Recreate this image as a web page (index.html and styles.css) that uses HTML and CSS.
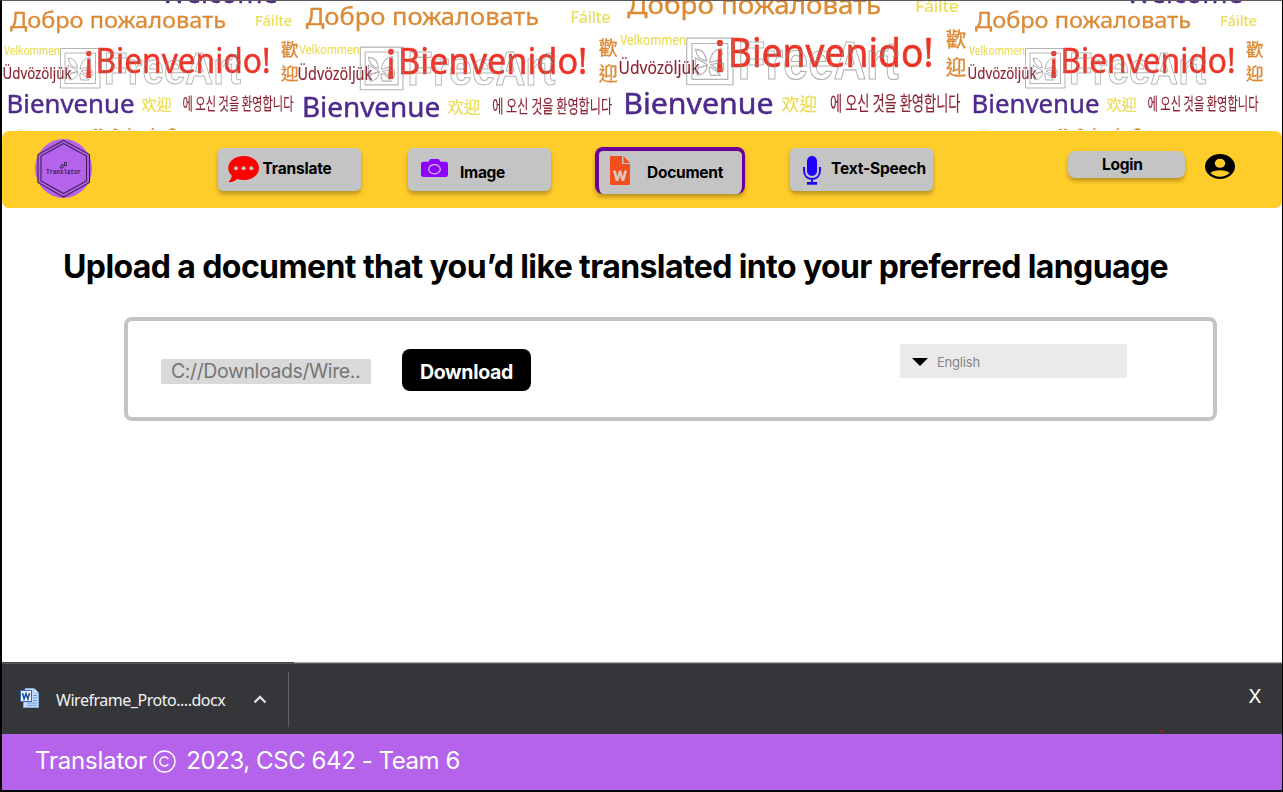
FILE: index.html
```html
<!DOCTYPE html>
<html lang="en">
<head>
<meta charset="utf-8">
<title>Translator</title>
<link rel="stylesheet" href="styles.css">
</head>
<body>
<div class="page">
  <header class="banner">
    <svg class="banner-art" viewBox="2 1 1280 129" width="1280" height="129">
      <defs>
        <g id="welcome-tile">
          <text class="violet" x="161" y="2.600" font-size="27" textLength="117" lengthAdjust="spacingAndGlyphs">Welcome</text>
          <text class="orange" x="10" y="28" font-size="22" textLength="216" lengthAdjust="spacingAndGlyphs">Добро пожаловать</text>
          <text class="yellow" x="255" y="26" font-size="14.5" textLength="37" lengthAdjust="spacingAndGlyphs">Fáilte</text>
          <text class="yellow" x="4" y="54.7" font-size="12.5" textLength="56" lengthAdjust="spacingAndGlyphs">Velkommen</text>
          <text class="maroon" x="2.5" y="78.7" font-size="16" textLength="69" lengthAdjust="spacingAndGlyphs">Üdvözöljük</text>
          <text class="red" x="83.500" y="70.500" font-size="37" textLength="10.500" lengthAdjust="spacingAndGlyphs">¡</text>
          <text class="red" x="95.500" y="73.3" font-size="34" textLength="175" lengthAdjust="spacingAndGlyphs">Bienvenido!</text>
          <text class="orange cjk" x="281" y="56" font-size="17.5">歡</text>
          <text class="orange cjk" x="281" y="80" font-size="17.5">迎</text>
          <text class="violet heavy" x="6.500" y="113" font-size="25" textLength="128" lengthAdjust="spacingAndGlyphs">Bienvenue</text>
          <text class="yellow cjk" x="141.500" y="110" font-size="15">欢迎</text>
          <text class="maroon kor" x="182.500" y="110" font-size="17" textLength="111" lengthAdjust="spacingAndGlyphs">에 오신 것을 환영합니다</text>
          <g class="mark">
            <path d="M60.500 48.500h39.500v39.500h-39.500z"/>
            <path d="M65 53h30.500v30.500h-30.500z"/>
            <path d="M68 58q8 0 9.500 10q-8-1-9.500-10zM68 65l10 6q-6 4-10 1zM90 57q-9 2-10 12q9-1 11-7zM81 71q6-2 11-1v6q-6-1-11-5zM68 77q4-6 10-5q-1 7-8 8zM80 73q6 2 9 7h-8q-2-4-1-7z"/>
            <text x="104" y="83.500" font-size="45" textLength="137" lengthAdjust="spacingAndGlyphs">FreeArt</text>
          </g>
          <path class="yellow" d="M17.500 129.500h3v1h-3z"/>
          <path class="orange" d="M94 129h3v1h-3zM99 129h3v1h-3zM113 130q2-3 5 0zM128 130l1-2h1.500l-1 2zM151.500 130l1-2h1.500l-1 2zM169 130q3-3.500 7 0z"/>
        </g>
      </defs>
      <use href="#welcome-tile"/>
      <use href="#welcome-tile" transform="translate(294.900 -5.200) scale(1.081 1.079)"/>
      <use href="#welcome-tile" transform="translate(615.600 -19) scale(1.175 1.179)"/>
      <use href="#welcome-tile" transform="translate(965 0)"/>
    </svg>
  </header>

  <nav class="nav">
    <svg class="logo" viewBox="0 0 57 59" width="57" height="59">
      <ellipse cx="28.500" cy="29.500" rx="28.500" ry="29.500" fill="#b463ea"/>
      <g fill="none" stroke="#42205f" stroke-width="1.150">
        <path d="M28.500 1.500L54.500 15.500V43.500L28.500 58L3 43.500V15.500Z"/>
        <path d="M28.500 4.500L51.500 17V42L28.500 54.500L6 42V17Z"/>
        <path d="M26 27q0-1.500 2-1.500v3.500h-3zM29.500 23.500h2v3l-2 .5z" stroke-width="1"/>
      </g>
      <text class="logo-text" x="11" y="35.200" textLength="35" lengthAdjust="spacingAndGlyphs">Translator</text>
    </svg>

    <a class="tab tab-translate">
      <svg width="32" height="28" viewBox="0 0 32 28">
        <path fill="#ff0000" d="M15.500 1C7 1 .300 6.200.300 13c0 3 1.200 5.500 3.500 7.600C3.600 23.500 1.800 25.600.300 27.300c3.600.2 6.800-1.200 9-3.200 2 .7 4.200 1 6.500 1 8.500 0 15.200-5.200 15.200-12S24.300 1 15.500 1z"/>
        <g fill="#c4c4c4"><circle cx="8" cy="13.300" r="2"/><circle cx="15.600" cy="13.300" r="2"/><circle cx="23.300" cy="13.300" r="2"/></g>
      </svg>
      <span>Translate</span>
    </a>
    <a class="tab tab-image">
      <svg width="27" height="19" viewBox="0 0 27 19">
        <path fill="#8f00ff" d="M2.500 2.700h5L8.600.8Q9 0 10 0h7q1 0 1.400.8l1.100 1.900h5q2.500 0 2.500 2.200v10.800q0 2.300-2.500 2.300h-22Q0 18 0 15.700V4.900q0-2.200 2.500-2.200z"/>
        <ellipse cx="13.500" cy="10.200" rx="5.800" ry="4.600" fill="none" stroke="#c4c4c4" stroke-width="1.300"/>
      </svg>
      <span>Image</span>
    </a>
    <a class="tab tab-document">
      <svg width="20" height="29" viewBox="0 0 20 29">
        <path fill="#f24e1e" d="M1 0h11v8h8v20q0 1-1 1H1q-1 0-1-1V1q0-1 1-1zM13.500 0L20 7h-6.500z"/>
        <path fill="#dcc8c0" d="M3 14.500h2.800l1.500 6 1.700-6h2.200l1.700 6 1.500-6h2.600l-2.800 10.500h-2.600L10 19.500 8.400 25H5.800z"/>
      </svg>
      <span>Document</span>
    </a>
    <a class="tab tab-speech">
      <svg width="18" height="29" viewBox="0 0 18 29">
        <rect x="4" y="0" width="10" height="20" rx="5" fill="#1d00ff"/>
        <path fill="none" stroke="#1d00ff" stroke-width="1.900" d="M1 11v3.500C1 20 4.500 23 9 23s8-3 8-8.500V11M9 23v4"/>
        <path fill="#1d00ff" d="M4 26h10v2.700H4z"/>
      </svg>
      <span>Text-Speech</span>
    </a>
    <a class="login">Login</a>
    <svg class="avatar" width="30" height="25" viewBox="0 0 30 25">
      <ellipse cx="15" cy="12.500" rx="15" ry="12.500"/>
      <ellipse cx="15" cy="9.300" rx="5.200" ry="4.500" fill="#ffcd29"/>
      <path fill="#ffcd29" d="M5.300 19Q9 16.300 15 16.300T24.700 19Q20.500 22.700 15 22.700T5.300 19z"/>
    </svg>
  </nav>

  <main class="content">
    <h1 class="title">Upload a document that you’d like translated into your preferred language</h1>
    <section class="panel">
      <div class="path">C://Downloads/Wire..</div>
      <button class="download">Download</button>
      <div class="select">
        <svg width="16" height="8" viewBox="0 0 16 8"><path d="M0 0h16L8 8z"/></svg>
        <span>English</span>
      </div>
    </section>
  </main>

  <section class="shelf">
    <div class="file">
      <svg class="word" width="19" height="20" viewBox="0 0 19 20">
        <path d="M5 .5h9l4.500 4.500v14.500h-15V14" fill="#c7dcf8" stroke="#86aeea" stroke-width=".8"/>
        <path d="M14 .5V5h4.500" fill="#fff" stroke="#7aa4e0" stroke-width=".8"/>
        <path d="M13 7.500h4M13 10h4M13 12.500h4M7 15h10M7 17.300h10" stroke="#6d98dc"/>
        <rect x=".5" y="2.500" width="11" height="11" fill="#edf4fd" stroke="#3568b5"/>
        <path d="M2.500 5l1.600 6L6 5.500 7.900 11l1.600-6" fill="none" stroke="#1c4f9f" stroke-width="1.500"/>
      </svg>
      <span class="file-name">Wireframe_Proto....docx</span>
      <svg class="chevron" width="14" height="9" viewBox="0 0 14 9"><path d="M1.500 7.500L7 2l5.500 5.500" fill="none" stroke="#dedede" stroke-width="2.300"/></svg>
    </div>
    <i class="dot"></i>
    <span class="close">X</span>
  </section>

  <footer class="footer">
    <span class="brand">Translator</span>
    <svg width="23" height="23" viewBox="0 0 23 23" fill="none" stroke="#fff" stroke-width="1.400"><circle cx="11.500" cy="11.500" r="10.500"/><path d="M15.300 9.200A4.500 4.500 0 1 0 15.300 13.800"/></svg>
    <span class="legal">2023, CSC 642 - Team 6</span>
  </footer>
</div>
</body>
</html>
```
FILE: styles.css
```css
* { box-sizing: border-box; }
body { margin: 0; background: #fff; font-family: Inter, "Liberation Sans", sans-serif; color: #000; }
svg { display: block; flex: none; }
.page {
  width: 1283px; height: 792px; overflow: hidden;
  display: flex; flex-direction: column;
  border: solid #000; border-width: 1px 1px 2px 2px; border-top-color: #5d5960;
}
.page span, .page a, .title, .path, .download { white-space: nowrap; }

.banner { height: 130px; flex: none; overflow: hidden; }
.banner-art { font-family: "Noto Sans", "Noto Sans CJK SC", sans-serif; filter: blur(.35px); }
.banner-art .cjk { font-family: "Noto Sans CJK TC", sans-serif; }
.banner-art .kor { font-family: "Noto Sans CJK KR", sans-serif; }
.violet { fill: #4f2a8c; stroke: #4f2a8c; stroke-width: .3; }
.orange { fill: #dc8a35; stroke: #dc8a35; stroke-width: .3; }
.yellow { fill: #ebdc55; stroke: #ebdc55; stroke-width: .2; }
.maroon { fill: #8c2533; stroke: #8c2533; stroke-width: .15; }
.red { fill: #ee3427; stroke: #ee3427; stroke-width: .5; }
.violet.heavy { stroke-width: .4; }
.mark { fill: none; stroke: #8c8c8c; stroke-opacity: .65; stroke-width: 1; }
.mark text { font-family: "Liberation Sans", sans-serif; font-weight: 700; }

.nav { height: 77px; flex: none; display: flex; align-items: flex-start; background: #ffcd29; border-radius: 7px; }
.logo { margin: 8px 0 0 33px; }
.logo-text { font: 700 6.500px "Liberation Mono", monospace; fill: #42205f; }
.tab { height: 43px; display: flex; align-items: flex-start; background: #c4c4c4; border-radius: 5px; box-shadow: 0 3px 4px rgba(0,0,0,.28); font-size: 15.500px; font-weight: 650; line-height: 20px; letter-spacing: -.2px; }
.tab-translate { width: 143px; margin: 17px 0 0 126px; padding: 7px 0 0 10px; }
.tab-translate span { margin: 4px 0 0 2.500px; }
.tab-image { width: 143px; margin: 17px 0 0 47px; padding: 11px 0 0 13px; }
.tab-image span { margin: 4px 0 0 12px; letter-spacing: -.3px; }
.tab-document { width: 150px; height: 47px; margin: 16px 0 0 44px; padding: 5px 0 0 11px; border: solid #6a0096; border-width: 4px 3px 0 4px; border-radius: 8px; letter-spacing: -.25px; }
.tab-document span { margin: 7px 0 0 17px; }
.tab-speech { width: 143px; margin: 17px 0 0 45px; padding: 8px 0 0 13px; }
.tab-speech span { margin: 3px 0 0 10px; }
.login { width: 117px; height: 27px; margin: 20px 0 0 135px; padding-left: 34px; background: #c4c4c4; border-radius: 7px; box-shadow: 0 3px 4px rgba(0,0,0,.28); font-size: 15.500px; font-weight: 650; line-height: 27px; letter-spacing: -.25px; }
.avatar { margin: 23px 0 0 20px; }

.content { flex: 1; padding: 39px 0 0 61px; }
.title { margin: 0; font-size: 32px; font-weight: 700; line-height: 40px; letter-spacing: -.6px; }
.panel { width: 1093px; height: 104px; margin: 30px 0 0 61px; display: flex; align-items: flex-start; border: 4px solid #c4c4c4; border-radius: 8px; }
.path { width: 210px; height: 25px; margin: 38px 0 0 33px; padding-left: 10px; background: #d9d9d9; border-radius: 2px; font-size: 19.500px; font-weight: 400; line-height: 25px; letter-spacing: -.4px; color: #757575; }
.download { width: 129px; height: 42px; margin: 28px 0 0 31px; padding: 4px 0 0; border: 0; border-radius: 8px; background: #000; color: #fff; font: 700 19.500px Inter, sans-serif; letter-spacing: -.3px; }
.select { width: 227px; height: 34px; margin: 23px 0 0 369px; padding-left: 12px; display: flex; align-items: center; gap: 9px; background: #eaeaea; color: #858585; font-size: 13px; letter-spacing: -.2px; }
.select svg { margin-top: 2px; }
.select span { padding-top: 2px; }

.shelf { height: 72px; flex: none; display: flex; background: linear-gradient(90deg, #3d4a3d 292px, #a8a8a8 292px) 0 0 / 100% 1px no-repeat, linear-gradient(#55565a, #55565a) 0 1px / 100% 1px no-repeat, #35363a; padding-top: 2px; }
.file { width: 287px; height: 55px; margin-top: 8px; padding-left: 18px; display: flex; align-items: center; border-right: 1px solid #606166; }
.word { margin-bottom: 3px; }
.file-name { margin-left: 17px; font: 16px "Noto Sans", sans-serif; letter-spacing: -.47px; color: #f1f1f1; }
.chevron { margin-left: auto; margin-right: 21px; }
.dot { width: 3px; height: 2px; margin: 66px 0 0 871px; background: #a31b1b; }
.close { margin: 21px 0 0 85.500px; font-size: 19px; font-weight: 400; line-height: 24px; color: #fff; }
.footer { height: 56px; flex: none; display: flex; align-items: center; padding: 0 0 3px 33px; background: #b463ea; color: #fff; font-size: 24px; line-height: 29px; }
.brand { letter-spacing: -.2px; }
.footer svg { margin: 2px 0 0 6px; }
.legal { margin-left: 10.500px; letter-spacing: -.43px; }
```
